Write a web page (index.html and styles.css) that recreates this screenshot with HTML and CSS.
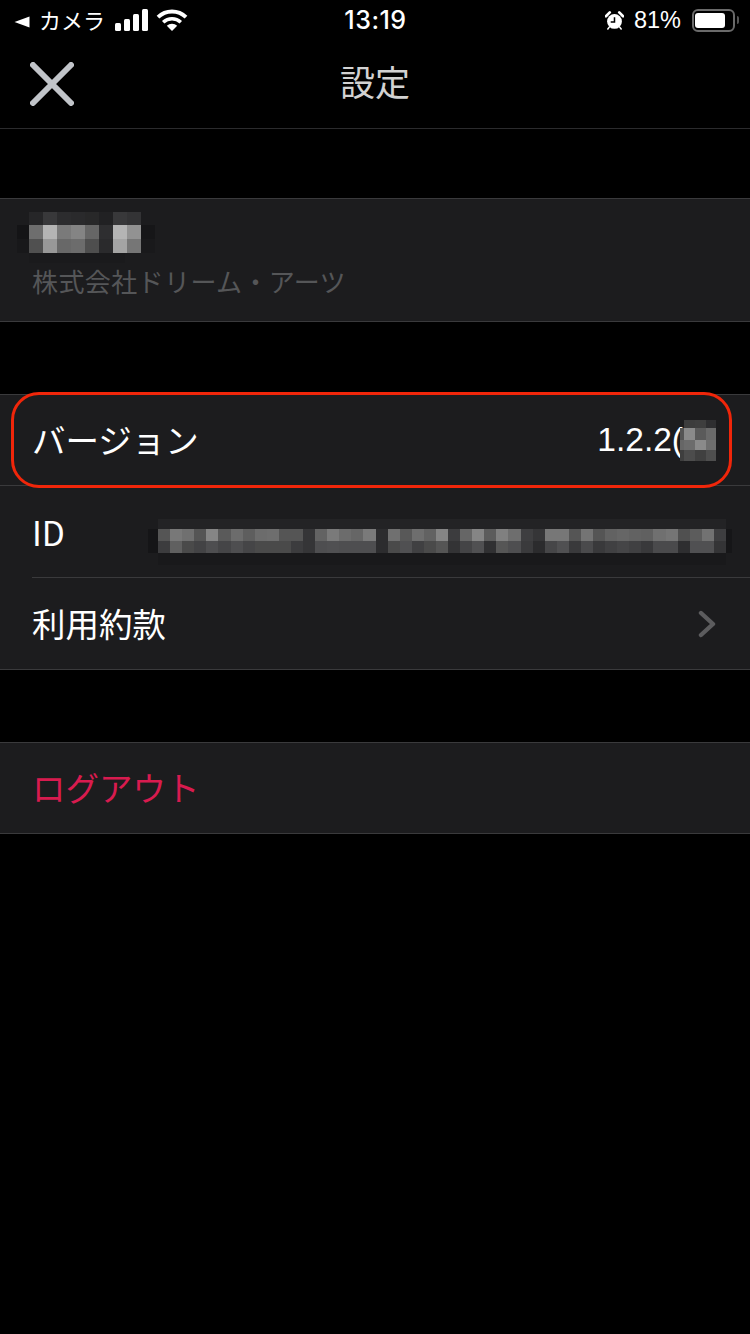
FILE: index.html
```html
<!DOCTYPE html>
<html lang="ja">
<head>
<meta charset="utf-8">
<title>設定</title>
<link rel="stylesheet" href="styles.css">
</head>
<body>
<div class="screen">
  <div class="status">
    <div class="status-left">
      <svg class="back-tri" viewBox="0 0 16 12"><path d="M0.5 6 15.5 0.5V11.5Z" fill="#fff"/></svg>
      <span class="carrier">カメラ</span>
      <svg class="signal" viewBox="0 0 34 22"><rect x="0" y="14" width="6" height="8" rx="1.5"/><rect x="9" y="10" width="6" height="12" rx="1.5"/><rect x="18" y="5" width="6" height="17" rx="1.5"/><rect x="27" y="0" width="6" height="22" rx="1.5"/></svg>
      <svg class="wifi" viewBox="0 0 32 22"><path d="M2 8.2A20 20 0 0 1 30 8.2" fill="none" stroke="#fff" stroke-width="3.8"/><path d="M7.2 13.2A13 13 0 0 1 24.8 13.2" fill="none" stroke="#fff" stroke-width="3.6"/><path d="M16 22 10.8 16.8A7.6 7.6 0 0 1 21.2 16.8Z" fill="#fff"/></svg>
    </div>
    <div class="clock">13:19</div>
    <div class="status-right">
      <svg class="alarm" viewBox="0 0 20 20"><circle cx="10" cy="11" r="7.8" fill="#fff"/><path d="M10 6.5V11.5H6" fill="none" stroke="#000" stroke-width="1.6"/><path d="M1 5.5 5 1.5M15 1.5 19 5.5" stroke="#fff" stroke-width="2.8" stroke-linecap="round"/><path d="M4.5 17 3 19M15.5 17 17 19" stroke="#fff" stroke-width="1.6" stroke-linecap="round"/></svg>
      <span class="pct">81%</span>
      <div class="battery"><div class="battery-fill"></div></div>
      <div class="battery-cap"></div>
    </div>
  </div>

  <header class="nav">
    <button class="close" aria-label="閉じる">
      <svg viewBox="0 0 44 44"><path d="M3 3 41 41M41 3 3 41" stroke="#c1c4c9" stroke-width="6" stroke-linecap="round"/></svg>
    </button>
    <h1 class="title">設定</h1>
  </header>

  <section class="group account">
    <svg class="mosaic mosaic-name" viewBox="0 0 138 51" shape-rendering="crispEdges">
      <g>
        <rect x="12" y="0" width="14" height="13" fill="#262628"/><rect x="26" y="0" width="14" height="13" fill="#38383a"/><rect x="40" y="0" width="14" height="13" fill="#2c2c2e"/><rect x="54" y="0" width="14" height="13" fill="#2a2a2c"/><rect x="68" y="0" width="14" height="13" fill="#282829"/><rect x="82" y="0" width="14" height="13" fill="#212123"/><rect x="96" y="0" width="14" height="13" fill="#38383a"/><rect x="110" y="0" width="14" height="13" fill="#333335"/>
        <rect x="0" y="13" width="12" height="14" fill="#141416"/><rect x="12" y="13" width="14" height="14" fill="#6e6e6e"/><rect x="26" y="13" width="14" height="14" fill="#b4b4b4"/><rect x="40" y="13" width="14" height="14" fill="#7a7a7a"/><rect x="54" y="13" width="14" height="14" fill="#848484"/><rect x="68" y="13" width="14" height="14" fill="#666"/><rect x="82" y="13" width="14" height="14" fill="#2e2e30"/><rect x="96" y="13" width="14" height="14" fill="#b4b4b4"/><rect x="110" y="13" width="14" height="14" fill="#929292"/><rect x="124" y="13" width="14" height="14" fill="#161618"/>
        <rect x="0" y="27" width="12" height="14" fill="#18181a"/><rect x="12" y="27" width="14" height="14" fill="#505050"/><rect x="26" y="27" width="14" height="14" fill="#989898"/><rect x="40" y="27" width="14" height="14" fill="#686868"/><rect x="54" y="27" width="14" height="14" fill="#6c6c6c"/><rect x="68" y="27" width="14" height="14" fill="#4e4e4e"/><rect x="82" y="27" width="14" height="14" fill="#2a2a2c"/><rect x="96" y="27" width="14" height="14" fill="#a4a4a4"/><rect x="110" y="27" width="14" height="14" fill="#767676"/><rect x="124" y="27" width="14" height="14" fill="#19191b"/>
        <rect x="12" y="41" width="96" height="10" fill="#1a1a1c"/>
      </g>
    </svg>
    <p class="company">株式会社ドリーム・アーツ</p>
  </section>

  <section class="group info">
    <div class="row">
      <span class="label">バージョン</span>
      <span class="value">1.2.2(</span>
      <svg class="mosaic mosaic-ver" viewBox="0 0 36 41" shape-rendering="crispEdges">
        <rect x="4" y="0" width="11" height="8" fill="#3c3c3c"/><rect x="15" y="0" width="11" height="8" fill="#3e3e3e"/><rect x="26" y="0" width="10" height="8" fill="#2e2e30"/>
        <rect x="0" y="8" width="4" height="12" fill="#555"/><rect x="4" y="8" width="11" height="12" fill="#8a8a8a"/><rect x="15" y="8" width="11" height="12" fill="#5a5a5a"/><rect x="26" y="8" width="10" height="12" fill="#6a6a6a"/>
        <rect x="0" y="20" width="4" height="10" fill="#666"/><rect x="4" y="20" width="11" height="10" fill="#6c6c6c"/><rect x="15" y="20" width="11" height="10" fill="#8a8a8a"/><rect x="26" y="20" width="10" height="10" fill="#6e6e6e"/>
        <rect x="0" y="30" width="4" height="11" fill="#3e3e3e"/><rect x="4" y="30" width="11" height="11" fill="#4c4c4c"/><rect x="15" y="30" width="11" height="11" fill="#404040"/><rect x="26" y="30" width="10" height="11" fill="#4e4e4e"/>
      </svg>
    </div>
    <div class="row">
      <span class="label label-id">ID</span>
      <svg class="mosaic mosaic-id" viewBox="0 0 49 46" preserveAspectRatio="none" shape-rendering="crispEdges">
        <rect x="1" y="0" width="47" height="10" fill="#232325"/><rect x="1" y="34" width="47" height="12" fill="#19191b"/>
        <rect x="0.2" y="10" width="0.8" height="24" fill="#151517"/><rect x="48" y="10" width="0.5" height="24" fill="#161618"/>
        <g>
          <rect x="1" y="10" width="1" height="12" fill="#555"/><rect x="2" y="10" width="1" height="12" fill="#787878"/><rect x="3" y="10" width="1" height="12" fill="#707070"/><rect x="4" y="10" width="1" height="12" fill="#555"/><rect x="5" y="10" width="1" height="12" fill="#858585"/><rect x="6" y="10" width="1" height="12" fill="#5a5a5a"/><rect x="7" y="10" width="1" height="12" fill="#6c6c6c"/><rect x="8" y="10" width="1" height="12" fill="#5e5e5e"/><rect x="9" y="10" width="1" height="12" fill="#6c6c6c"/><rect x="10" y="10" width="1" height="12" fill="#6e6e6e"/><rect x="11" y="10" width="1" height="12" fill="#555"/><rect x="12" y="10" width="1" height="12" fill="#555"/><rect x="13" y="10" width="1" height="12" fill="#353537"/><rect x="14" y="10" width="1" height="12" fill="#636363"/><rect x="15" y="10" width="1" height="12" fill="#7a7a7a"/><rect x="16" y="10" width="1" height="12" fill="#6c6c6c"/><rect x="17" y="10" width="1" height="12" fill="#666"/><rect x="18" y="10" width="1" height="12" fill="#7a7a7a"/><rect x="19" y="10" width="1" height="12" fill="#2c2c2e"/><rect x="20" y="10" width="1" height="12" fill="#707070"/><rect x="21" y="10" width="1" height="12" fill="#585858"/><rect x="22" y="10" width="1" height="12" fill="#6e6e6e"/><rect x="23" y="10" width="1" height="12" fill="#626262"/><rect x="24" y="10" width="1" height="12" fill="#858585"/>
          <rect x="25" y="10" width="1" height="12" fill="#3c3c3e"/><rect x="26" y="10" width="1" height="12" fill="#666"/><rect x="27" y="10" width="1" height="12" fill="#858585"/><rect x="28" y="10" width="1" height="12" fill="#5c5c5c"/><rect x="29" y="10" width="1" height="12" fill="#808080"/><rect x="30" y="10" width="1" height="12" fill="#6e6e6e"/><rect x="31" y="10" width="1" height="12" fill="#3e3e40"/><rect x="32" y="10" width="1" height="12" fill="#353537"/><rect x="33" y="10" width="1" height="12" fill="#777"/><rect x="34" y="10" width="1" height="12" fill="#777"/><rect x="35" y="10" width="1" height="12" fill="#555"/><rect x="36" y="10" width="1" height="12" fill="#747474"/><rect x="37" y="10" width="1" height="12" fill="#555"/><rect x="38" y="10" width="1" height="12" fill="#626262"/><rect x="39" y="10" width="1" height="12" fill="#666"/><rect x="40" y="10" width="1" height="12" fill="#626262"/><rect x="41" y="10" width="1" height="12" fill="#606060"/><rect x="42" y="10" width="1" height="12" fill="#707070"/><rect x="43" y="10" width="1" height="12" fill="#757575"/><rect x="44" y="10" width="1" height="12" fill="#505050"/><rect x="45" y="10" width="1" height="12" fill="#5c5c5c"/><rect x="46" y="10" width="1" height="12" fill="#727272"/><rect x="47" y="10" width="1" height="12" fill="#3e3e40"/>
        </g>
        <g>
          <rect x="1" y="22" width="1" height="12" fill="#3c3c3e"/><rect x="2" y="22" width="1" height="12" fill="#606060"/><rect x="3" y="22" width="1" height="12" fill="#4a4a4a"/><rect x="4" y="22" width="1" height="12" fill="#434345"/><rect x="5" y="22" width="1" height="12" fill="#4e4e50"/><rect x="6" y="22" width="1" height="12" fill="#454547"/><rect x="7" y="22" width="1" height="12" fill="#4e4e50"/><rect x="8" y="22" width="1" height="12" fill="#454547"/><rect x="9" y="22" width="1" height="12" fill="#4a4a4a"/><rect x="10" y="22" width="1" height="12" fill="#4a4a4a"/><rect x="11" y="22" width="1" height="12" fill="#4a4a4a"/><rect x="12" y="22" width="1" height="12" fill="#3c3c3e"/><rect x="13" y="22" width="1" height="12" fill="#353537"/><rect x="14" y="22" width="1" height="12" fill="#4e4e50"/><rect x="15" y="22" width="1" height="12" fill="#505052"/><rect x="16" y="22" width="1" height="12" fill="#4e4e50"/><rect x="17" y="22" width="1" height="12" fill="#4e4e50"/><rect x="18" y="22" width="1" height="12" fill="#4e4e50"/><rect x="19" y="22" width="1" height="12" fill="#2c2c2e"/><rect x="20" y="22" width="1" height="12" fill="#4a4a4a"/><rect x="21" y="22" width="1" height="12" fill="#505052"/><rect x="22" y="22" width="1" height="12" fill="#404042"/><rect x="23" y="22" width="1" height="12" fill="#4a4a4a"/><rect x="24" y="22" width="1" height="12" fill="#555"/>
          <rect x="25" y="22" width="1" height="12" fill="#333335"/><rect x="26" y="22" width="1" height="12" fill="#444446"/><rect x="27" y="22" width="1" height="12" fill="#505052"/><rect x="28" y="22" width="1" height="12" fill="#303032"/><rect x="29" y="22" width="1" height="12" fill="#565656"/><rect x="30" y="22" width="1" height="12" fill="#4e4e50"/><rect x="31" y="22" width="1" height="12" fill="#3a3a3c"/><rect x="32" y="22" width="1" height="12" fill="#2b2b2d"/><rect x="33" y="22" width="1" height="12" fill="#464648"/><rect x="34" y="22" width="1" height="12" fill="#505052"/><rect x="35" y="22" width="1" height="12" fill="#39393b"/><rect x="36" y="22" width="1" height="12" fill="#4a4a4c"/><rect x="37" y="22" width="1" height="12" fill="#39393b"/><rect x="38" y="22" width="1" height="12" fill="#404042"/><rect x="39" y="22" width="1" height="12" fill="#454547"/><rect x="40" y="22" width="1" height="12" fill="#404042"/><rect x="41" y="22" width="1" height="12" fill="#39393b"/><rect x="42" y="22" width="1" height="12" fill="#4a4a4c"/><rect x="43" y="22" width="1" height="12" fill="#4a4a4c"/><rect x="44" y="22" width="1" height="12" fill="#2e2e30"/><rect x="45" y="22" width="1" height="12" fill="#505052"/><rect x="46" y="22" width="1" height="12" fill="#505052"/><rect x="47" y="22" width="1" height="12" fill="#343436"/>
        </g>
      </svg>
    </div>
    <div class="row">
      <span class="label">利用約款</span>
      <svg class="chevron" viewBox="0 0 18 28"><path d="M3 3 15 14 3 25" fill="none" stroke="#5c5c5e" stroke-width="4.4" stroke-linecap="round" stroke-linejoin="round"/></svg>
    </div>
    <div class="highlight"></div>
  </section>

  <section class="group logout">
    <span class="logout-label">ログアウト</span>
  </section>
</div>
</body>
</html>
```
FILE: styles.css
```css
* {
  box-sizing: border-box;
}

html,
body {
  margin: 0;
  background: #000;
}

.screen {
  width: 750px;
  height: 1334px;
  overflow: hidden;
  background: #000;
  color: #fff;
  font-family: "Liberation Sans", "Noto Sans CJK JP", sans-serif;
}

/* Status bar */
.status {
  height: 40px;
  display: grid;
  grid-template-columns: 1fr auto 1fr;
  align-items: center;
  padding: 0 11px 0 14px;
  font-size: 24px;
}

.status-left,
.status-right {
  display: flex;
  align-items: center;
}

.status-right {
  justify-content: flex-end;
}

.back-tri {
  width: 16px;
  height: 12px;
  margin-right: 9px;
  margin-top: 3px;
}

.carrier {
  font-family: "Noto Sans CJK JP", sans-serif;
  font-size: 22px;
  line-height: 1;
  margin-right: 10px;
  margin-top: -3px;
}

.signal {
  width: 34px;
  height: 22px;
  fill: #fff;
  margin-right: 7px;
}

.wifi {
  width: 32px;
  height: 22px;
}

.clock {
  font-family: Inter, "Liberation Sans", sans-serif;
  font-size: 25px;
  font-weight: 500;
  letter-spacing: 0.5px;
  margin-right: 2px;
}

.alarm {
  width: 19px;
  height: 19px;
  margin-right: 10px;
}

.pct {
  font-size: 23.5px;
  margin-right: 11px;
}

.battery {
  width: 43px;
  height: 23px;
  border: 2px solid #6a6a6a;
  border-radius: 6px;
  padding: 2px 1px;
}

.battery-fill {
  width: 81%;
  height: 100%;
  background: #fff;
  border-radius: 3px;
}

.battery-cap {
  width: 2px;
  height: 8px;
  margin-left: 2px;
  background: #555;
  border-radius: 0 2px 2px 0;
}

/* Navigation */
.nav {
  height: 89px;
  display: flex;
  align-items: center;
  justify-content: center;
  position: relative;
  border-bottom: 1px solid #2b2b2d;
}

.close {
  position: absolute;
  left: 30px;
  top: 22px;
  width: 44px;
  height: 44px;
  padding: 0;
  border: 0;
  background: none;
}

.close svg {
  display: block;
  width: 44px;
  height: 44px;
}

.title {
  margin: 0 0 6px;
  font-family: "Noto Sans CJK JP", sans-serif;
  font-size: 35px;
  font-weight: 400;
  line-height: 1.2;
  color: #d2d2d2;
}

/* Groups */
.group {
  position: relative;
  background: #1c1c1e;
  border-top: 1px solid #3a3a3c;
  border-bottom: 1px solid #3a3a3c;
}

.account {
  margin-top: 69px;
  height: 124px;
  padding: 13px 0 0 17px;
}

.mosaic {
  display: block;
  flex: none;
}

.mosaic-name {
  width: 138px;
  height: 51px;
}

.company {
  margin: -1px 0 0;
  padding: 0 0 0 15px;
  font-family: "Noto Sans CJK JP", sans-serif;
  font-size: 26px;
  line-height: 38px;
  letter-spacing: 0.4px;
  color: #555658;
}

.info {
  margin-top: 72px;
  height: 276px;
}

.row {
  height: 92px;
  margin-left: 32px;
  display: flex;
  align-items: center;
  border-bottom: 1px solid #3a3a3c;
  padding-right: 34px;
}

.row:first-child {
  margin-left: 0;
  padding-left: 32px;
  height: 91px;
}

.row:last-of-type {
  border-bottom: 0;
  padding-right: 32px;
}

.label {
  font-family: "Noto Sans CJK JP", sans-serif;
  font-size: 33.5px;
  line-height: 1;
  color: #fff;
  flex: 1;
  margin-bottom: 2px;
}

.label-id {
  margin-bottom: 0;
}

.value {
  font-size: 33.5px;
  line-height: 1;
  color: #fff;
  white-space: nowrap;
}

.mosaic-ver {
  width: 36px;
  height: 41px;
  margin-left: -3px;
}

.mosaic-id {
  width: 592px;
  height: 46px;
  margin-top: 20px;
  margin-right: -22px;
}

.chevron {
  width: 18px;
  height: 28px;
}

.highlight {
  position: absolute;
  left: 11px;
  top: -3px;
  width: 721px;
  height: 96px;
  border: 3px solid #f0260a;
  border-radius: 28px;
  pointer-events: none;
}

.logout {
  margin-top: 72px;
  height: 92px;
  display: flex;
  align-items: center;
  padding-left: 32px;
}

.logout-label {
  font-family: "Noto Sans CJK JP", sans-serif;
  font-size: 33.5px;
  line-height: 1;
  color: #d81b4f;
  margin-bottom: 3px;
}
```
